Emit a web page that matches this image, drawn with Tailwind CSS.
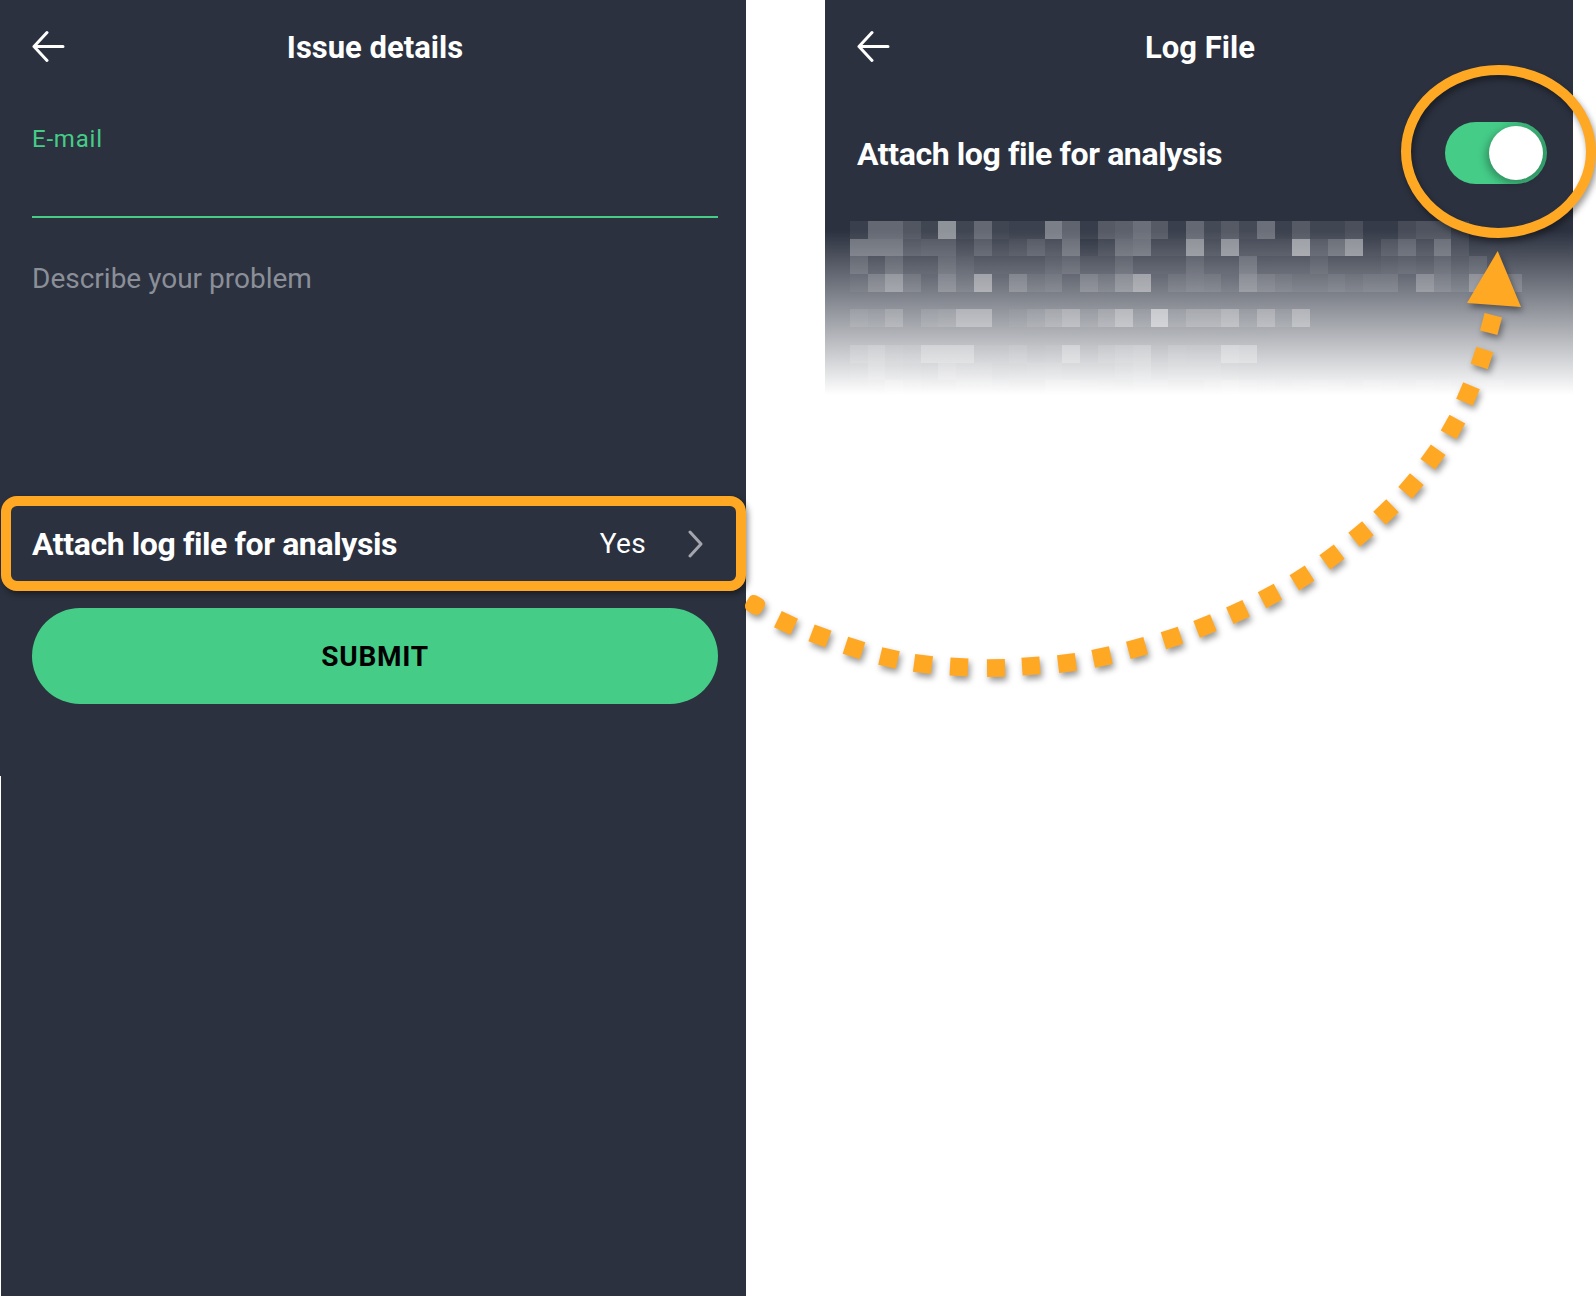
<!DOCTYPE html>
<html lang="en">
<head>
  <meta charset="UTF-8" />
  <title>Issue details - Log File</title>
  <script src="https://cdn.jsdelivr.net/npm/@tailwindcss/browser@4"></script>
</head>
<body class="bg-white font-['Roboto',sans-serif]">
  <div class="relative w-[1596px] h-[1296px] overflow-hidden flex bg-white">

    <!-- Issue details screen -->
    <section class="w-[746px] h-full flex flex-col bg-[#2b313f] text-white">
      <div class="h-[776px] shrink-0">
        <header class="relative h-[96px] pl-[4px] flex items-center justify-center">
          <svg class="absolute left-[32px] top-[30px]" width="34" height="34" viewBox="0 0 34 34" fill="none" stroke="#fff" stroke-width="3" stroke-linecap="round" stroke-linejoin="round"><path d="M31 16.5H2M15 2.5 2 16.5 15 30.5" /></svg>
          <h1 class="text-[31px] font-bold">Issue details</h1>
        </header>
        <div class="pl-[32px] pr-[28px] pt-[29px]">
          <label class="block text-[24px] leading-[28px] tracking-[0.8px] text-[#45cd88]">E-mail</label>
          <div class="mt-[63px] h-[2px] bg-[#45cd88]"></div>
          <p class="mt-[44px] text-[28px] leading-[34px] text-[#8b8f98]">Describe your problem</p>
        </div>
        <div class="mt-[200px] ml-[1px] h-[95px] flex items-center border-[10px] border-[#ffa823] rounded-[16px] pl-[21px] pr-[33px] shadow-[2px_3px_6px_rgba(0,0,0,0.45)]">
          <span class="flex-1 text-[32px] font-bold tracking-[-0.4px]">Attach log file for analysis</span>
          <span class="text-[28px] font-normal tracking-[0.3px]">Yes</span>
          <svg class="ml-[42px]" width="15" height="28" viewBox="0 0 15 28" fill="none" stroke="#a3a6ab" stroke-width="3" stroke-linecap="round" stroke-linejoin="round"><path d="M2 2 13 14 2 26" /></svg>
        </div>
        <div class="ml-[32px] mr-[28px] mt-[17px] h-[96px] pt-[1px] rounded-full bg-[#45cd88] flex items-center justify-center">
          <span class="text-[28px] font-bold tracking-[0.7px] text-black">SUBMIT</span>
        </div>
      </div>
      <div class="flex-1 border-l border-white"></div>
    </section>

    <!-- Log File screen -->
    <section class="ml-[79px] w-[748px] h-[395px] flex flex-col bg-[#2b313f] text-white">
      <header class="relative h-[96px] shrink-0 pl-[2px] flex items-center justify-center">
        <svg class="absolute left-[32px] top-[30px]" width="34" height="34" viewBox="0 0 34 34" fill="none" stroke="#fff" stroke-width="3" stroke-linecap="round" stroke-linejoin="round"><path d="M31 16.5H2M15 2.5 2 16.5 15 30.5" /></svg>
        <h1 class="text-[31px] font-bold">Log File</h1>
      </header>
      <div class="h-[116px] shrink-0 flex items-center justify-between pl-[32px] pr-[26px]">
        <span class="text-[32px] font-bold tracking-[-0.4px]">Attach log file for analysis</span>
        <div class="w-[102px] h-[62px] mb-[2px] rounded-full bg-[linear-gradient(90deg,#45cd88_55%,#36a06c_100%)] flex items-center justify-end pr-[4px]">
          <div class="w-[54px] h-[54px] rounded-full bg-white shadow-[-3px_3px_8px_rgba(0,0,0,0.3)]"></div>
        </div>
      </div>
      <div id="logBlock" class="flex-1 min-h-0 overflow-hidden pt-[9px] pl-[25px] bg-[linear-gradient(#2b313f_10%,#ffffff_100%)]"></div>
    </section>

    <!-- Orange annotation laid over both screens -->
    <svg id="annotation" class="absolute left-0 top-0 drop-shadow-[2px_4px_3px_rgba(0,0,0,0.4)]" width="1596" height="1296" viewBox="0 0 1596 1296" fill="#ffa823">
      <ellipse cx="1498.5" cy="151.5" rx="92.5" ry="81.5" fill="none" stroke="#ffa823" stroke-width="10" />
      <path d="M1497.7 251 1467 303 1521 307Z" />
    </svg>
  </div>

  <script>
    // pixelated log text, white alpha per block (0 = nothing)
    const logRows = [
      [.07,.27,.27,.18,.1,.47,.1,.27,.1,.08,.08,.38,.25,.06,.2,.23,.3,.2,.07,.27,.12,.2,.12,.3,.08,.2,.1,.1,.15,.05,.05,.13,.17,.17,.08],
      [.3,.3,.3,.15,.17,.17,.07,.17,.07,.1,.17,.1,.27,0,.07,.25,.28,.08,.08,.45,.1,.45,.1,.1,.1,.52,.17,.27,.45,.05,.13,.22,.1,.27,.08],
      [.15,.03,.15,.03,.03,.15,.08,.03,.03,.03,.03,.08,.12,.03,.03,.12,.03,.03,.03,.12,.05,.05,.2,.05,.05,.05,.1,.04,.04,.04,.06,.08,.06,.12,.06,.1],
      [.04,.18,.32,.1,0,.2,.08,.4,0,.2,.07,.1,0,.18,.1,.25,.4,0,.08,.12,.1,.04,.25,.15,.1,.07,.07,.1,.07,.1,.1,0,.25,.14,.08,.28,.14,.14],
      [],
      [.1,.07,.18,0,.1,.13,.3,.3,0,.04,.1,.18,.28,.07,.18,.35,.07,.5,.1,.2,.2,.3,.07,.25,.07,.3],
      [],
      [.15,.22,.12,.1,.3,.3,.3,.05,.05,.1,.03,.05,.3,.03,.12,.18,.22,.03,.12,.1,.1,.35,.3],
      [.05,.18,.08,.05,0,.18,.1,.1,.03,.05,.08,.1,.05,.05,.05,.12,.18,.05,.1,.1,.1,.05],
      [.05,.1,.25,.15,.05,.05,.15,.15,.1,.05,.05,.25,.25,.15,.1,.05,.15,.15,.05,.05,.15,.25,.15,.1,.05,.1,.15,.1,.05,.15,.1,.05,.15,.1,.05,.1,.15,.05]
    ];
    const logBlock = document.getElementById("logBlock");
    logRows.forEach(row => {
      let html = "";
      row.forEach(a => {
        html += `<div class="w-[17.7px] h-full" style="background:rgba(255,255,255,${a})"></div>`;
      });
      logBlock.innerHTML += `<div class="flex h-[17.7px]">${html}</div>`;
    });

    // dotted curve: centres of the dots, from the box up to the arrow head
    const dots = [[755,605],[786,623],[820,636],[854,648],[889,658],[923,664],[959,667],[996,668],[1031,666],[1067,663],[1102,657],[1137,648],[1172,638],[1205,626],[1238,612],[1270,596],[1302,578],[1332,557],[1361,534],[1386,512],[1411,486],[1433,457],[1453,427],[1468,394],[1482,358],[1491,324]];
    const svg = document.getElementById("annotation");
    dots.forEach((d, i) => {
      const a = dots[Math.max(i - 1, 0)], b = dots[Math.min(i + 1, dots.length - 1)];
      const deg = Math.atan2(b[1] - a[1], b[0] - a[0]) * 180 / Math.PI;
      const r = document.createElementNS("http://www.w3.org/2000/svg", "rect");
      r.setAttribute("x", -9); r.setAttribute("y", -9);
      r.setAttribute("width", 18); r.setAttribute("height", 18);
      if (i === 0) r.setAttribute("rx", 6);
      r.setAttribute("transform", `translate(${d[0]} ${d[1]}) rotate(${deg})`);
      svg.appendChild(r);
    });
  </script>
</body>
</html>
